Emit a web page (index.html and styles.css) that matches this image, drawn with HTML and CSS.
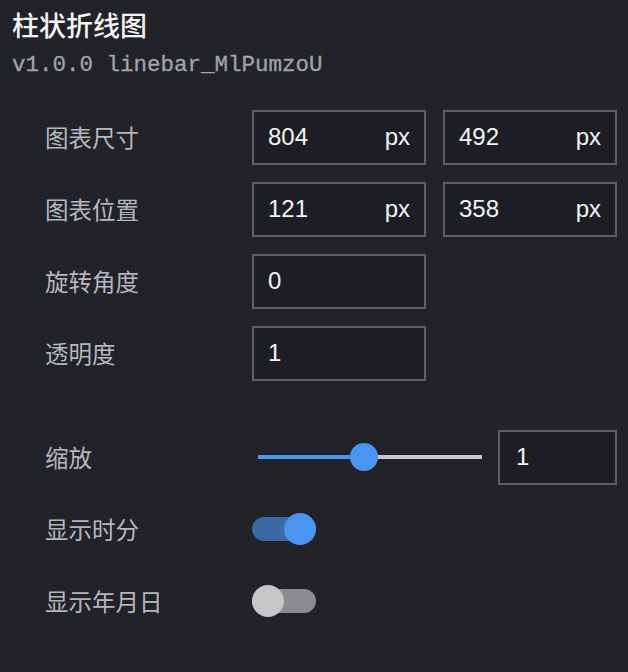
FILE: index.html
```html
<!DOCTYPE html>
<html lang="zh">
<head>
<meta charset="utf-8">
<link rel="stylesheet" href="styles.css">
</head>
<body>
<div class="panel">
  <div class="title">柱状折线图</div>
  <div class="subtitle">v1.0.0 linebar_MlPumzoU</div>
  <div class="form">
    <div class="row">
      <div class="label">图表尺寸</div>
      <div class="field">
        <div class="input"><span>804</span><span>px</span></div>
        <div class="input"><span>492</span><span>px</span></div>
      </div>
    </div>
    <div class="row">
      <div class="label">图表位置</div>
      <div class="field">
        <div class="input"><span>121</span><span>px</span></div>
        <div class="input"><span>358</span><span>px</span></div>
      </div>
    </div>
    <div class="row">
      <div class="label">旋转角度</div>
      <div class="field">
        <div class="input"><span>0</span></div>
      </div>
    </div>
    <div class="row">
      <div class="label">透明度</div>
      <div class="field">
        <div class="input"><span>1</span></div>
      </div>
    </div>
    <div class="row row-spaced">
      <div class="label">缩放</div>
      <div class="field">
        <div class="slider">
          <div class="slider-fill" style="width: 106px"></div>
          <div class="slider-thumb" style="left: 106px"></div>
        </div>
        <div class="input input-small"><span>1</span></div>
      </div>
    </div>
    <div class="row">
      <div class="label">显示时分</div>
      <div class="field">
        <div class="switch on"><div class="switch-track"></div><div class="switch-thumb"></div></div>
      </div>
    </div>
    <div class="row">
      <div class="label">显示年月日</div>
      <div class="field">
        <div class="switch off"><div class="switch-track"></div><div class="switch-thumb"></div></div>
      </div>
    </div>
  </div>
</div>
</body>
</html>
```

FILE: styles.css
```css
html, body {
  margin: 0;
  padding: 0;
  background: #212329;
  width: 628px;
  height: 672px;
  overflow: hidden;
}

.panel {
  padding: 6px 12px 0 12px;
  font-family: "Liberation Sans", "Noto Sans CJK SC", sans-serif;
}

.title {
  font-family: "Noto Sans CJK SC", sans-serif;
  font-size: 27px;
  font-weight: 500;
  color: #f4f4f5;
  line-height: 38px;
}

.subtitle {
  font-family: "Liberation Mono", monospace;
  font-size: 22.5px;
  color: #a3a4a9;
  line-height: 28px;
  margin-top: 7px;
  -webkit-text-stroke: 0.3px #a3a4a9;
}

.form {
  padding-left: 33px;
  margin-top: 30px;
  display: flex;
  flex-direction: column;
  gap: 16px;
}

.row {
  display: flex;
  align-items: center;
  height: 56px;
}

.row-spaced {
  margin-top: 32px;
}

.label {
  width: 207px;
  flex-shrink: 0;
  font-family: "Noto Sans CJK SC", sans-serif;
  font-size: 23.5px;
  color: #b6b7bc;
}

.field {
  display: flex;
  align-items: center;
  gap: 17px;
}

.input {
  box-sizing: border-box;
  width: 174px;
  height: 55px;
  border: 2px solid #5d5f67;
  background: #1d1f24;
  padding: 0 14px 0 14px;
  display: flex;
  align-items: center;
  justify-content: space-between;
  font-family: "Liberation Sans", sans-serif;
  font-size: 24px;
  color: #f3f3f4;
}

.input-small {
  width: 119px;
  padding-left: 16px;
}

.slider {
  position: relative;
  width: 224px;
  height: 4px;
  margin-left: 6px;
  margin-right: -1px;
  background: #c7c8cc;
}

.slider-fill {
  height: 4px;
  background: #4b97f0;
}

.slider-thumb {
  position: absolute;
  top: 50%;
  width: 28px;
  height: 28px;
  border-radius: 50%;
  background: #4a96ef;
  transform: translate(-50%, -50%);
}

.switch {
  position: relative;
  width: 64px;
  height: 32px;
  display: flex;
  align-items: center;
}

.switch-track {
  width: 64px;
  height: 24px;
  border-radius: 12px;
}

.switch-thumb {
  position: absolute;
  top: 0;
  width: 32px;
  height: 32px;
  border-radius: 50%;
}

.switch.on .switch-track {
  background: #3a6aa3;
}

.switch.on .switch-thumb {
  right: 0;
  background: #4a96ef;
}

.switch.off .switch-track {
  background: #8b8c90;
}

.switch.off .switch-thumb {
  left: 0;
  background: #c6c6c7;
}
```
